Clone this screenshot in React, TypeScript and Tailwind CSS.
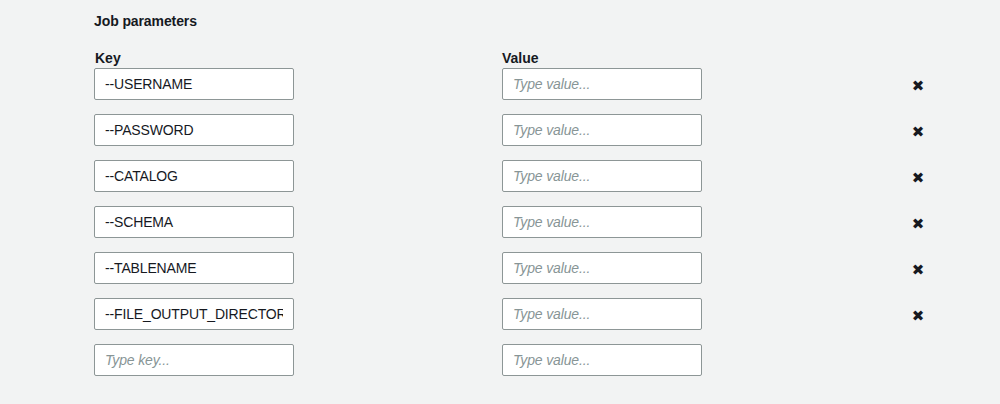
import { useState } from "react";

type Param = { key: string; value: string };

const initial: Param[] = [
  { key: "--USERNAME", value: "" },
  { key: "--PASSWORD", value: "" },
  { key: "--CATALOG", value: "" },
  { key: "--SCHEMA", value: "" },
  { key: "--TABLENAME", value: "" },
  { key: "--FILE_OUTPUT_DIRECTORY", value: "" },
];

const inputCls =
  "w-[200px] h-8 px-[10px] bg-white border border-[#8d9696] rounded-[2px] text-[14px] tracking-[-0.15px] text-[#16191f] placeholder:italic placeholder:text-[#879596] outline-none";

export default function App() {
  const [params, setParams] = useState<Param[]>(initial);
  const [draft, setDraft] = useState<Param>({ key: "", value: "" });

  function update(i: number, field: keyof Param, v: string) {
    setParams((p) => p.map((row, j) => (j === i ? { ...row, [field]: v } : row)));
  }

  function remove(i: number) {
    setParams((p) => p.filter((_, j) => j !== i));
  }

  return (
    <div
      className="min-h-[404px] bg-[#f2f3f3] pl-[94px] pt-[13px] text-[#16191f]"
      style={{ fontFamily: '"Liberation Sans", Arial, sans-serif' }}
    >
      <h3 className="text-[14px] font-bold leading-4 tracking-[-0.1px]">Job parameters</h3>

      <div className="mt-[21px] flex text-[14px] font-bold leading-4">
        <span className="w-[200px] pl-[1px]">Key</span>
        <span className="ml-[208px] w-[200px]">Value</span>
      </div>

      <div className="mt-[2px] flex flex-col gap-[14px]">
        {params.map((p, i) => (
          <div key={i} className="flex items-center">
            <input
              className={inputCls}
              value={p.key}
              placeholder="Type key..."
              onChange={(e) => update(i, "key", e.target.value)}
            />
            <input
              className={`${inputCls} ml-[208px]`}
              value={p.value}
              placeholder="Type value..."
              onChange={(e) => update(i, "value", e.target.value)}
            />
            <button
              onClick={() => remove(i)}
              className="ml-[209px] w-[14px] text-[15px] leading-none text-[#16191f] mt-[4px]"
              style={{ fontFamily: '"DejaVu Sans", sans-serif' }}
            >
              ✖
            </button>
          </div>
        ))}
        <div className="flex items-center">
          <input
            className={inputCls}
            value={draft.key}
            placeholder="Type key..."
            onChange={(e) => setDraft({ ...draft, key: e.target.value })}
          />
          <input
            className={`${inputCls} ml-[208px]`}
            value={draft.value}
            placeholder="Type value..."
            onChange={(e) => setDraft({ ...draft, value: e.target.value })}
          />
        </div>
      </div>
    </div>
  );
}
